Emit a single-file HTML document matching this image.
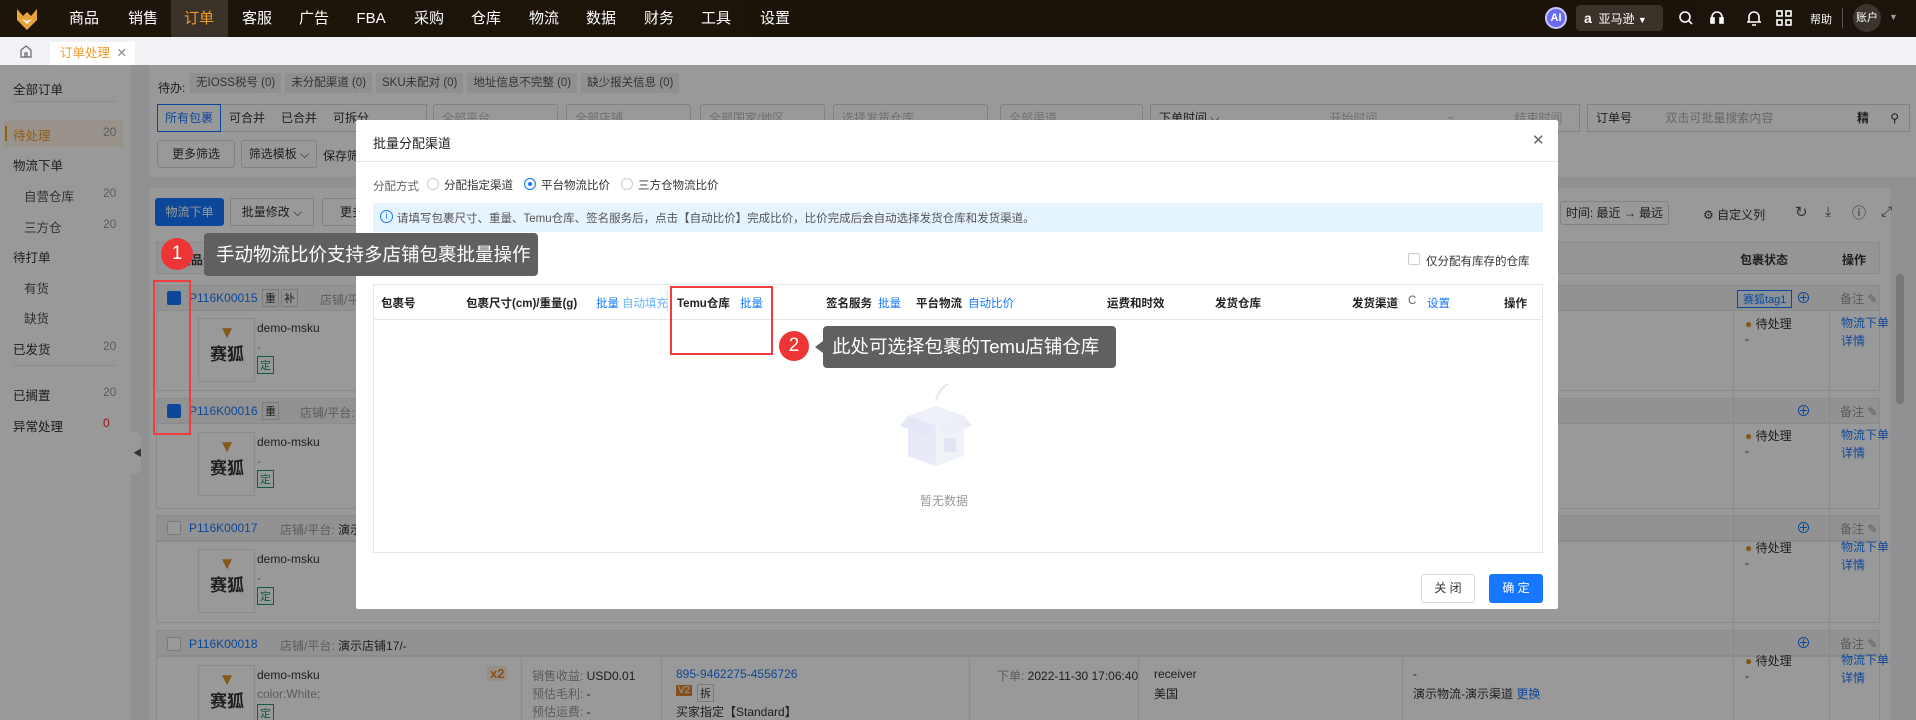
<!DOCTYPE html>
<html style="overflow:hidden"><head><meta charset="utf-8">
<style>
*{box-sizing:border-box;margin:0;padding:0}
html,body{overflow:hidden}
body{width:1916px;height:720px;position:relative;font-family:"Liberation Sans","Noto Sans CJK SC",sans-serif;font-size:12px;color:#333;background:#f0f2f5}
.a{position:absolute;white-space:nowrap}
.nav{left:0;top:0;width:1916px;height:37px;background:linear-gradient(90deg,#1e150a,#1a1208 60%,#1c140b);}
.nav .it{position:absolute;top:0;height:37px;line-height:37px;color:#fff;font-size:15px;transform:translateX(-50%)}
.tabbar{left:0;top:37px;width:1916px;height:28px;background:#f0f2f5}
.side{left:0;top:65px;width:131px;height:655px;background:#fff}
.side .s{position:absolute;font-size:12.5px;color:#333}
.side .n{position:absolute;left:103px;font-size:12px;color:#999}
.blue{color:#1677ff}
.card{position:absolute;background:#fff;border:1px solid #e4e6ea;border-radius:3px}
.btn{position:absolute;border:1px solid #d9d9d9;border-radius:3px;background:#fff;font-size:12px;text-align:center;white-space:nowrap}
.rowh{position:absolute;left:156px;width:1724px;height:26px;background:#f3f4f6;border:1px solid #e6e8eb}
.cb{position:absolute;width:14px;height:14px;border:1px solid #ccc;background:#fff;border-radius:2px}
.cbc{background:#1677ff;border-color:#1677ff}
.mask{left:0;top:65px;width:1916px;height:655px;background:rgba(0,0,0,.4)}
.modal{left:356px;top:120px;width:1202px;height:489px;background:#fff;border-radius:2px}
.red{position:absolute;border:2px solid #f23c3c}
.tip{position:absolute;background:#606060;color:#fff;border-radius:4px;font-size:19px;white-space:nowrap;overflow:hidden}
.circ{position:absolute;border-radius:50%;background:#ee3535;color:#fff;text-align:center;font-size:19px}
.prod{position:absolute;width:57px;height:64px;border:1px solid #e6e6e6;background:#fff}
.sel{position:absolute;top:104px;height:28px;background:#fff;border:1px solid #d9d9d9;border-radius:3px;color:#bbb;font-size:12px;line-height:26px;padding-left:8px}
</style></head><body>

<!-- NAV -->
<div class="a nav">
 <svg class="a" style="left:14px;top:6px" width="26" height="26" viewBox="0 0 26 26"><path d="M3 3 L9 10 L13 6 L17 10 L23 3 L23 14 L13 24 L3 14Z" fill="#e9a33b"/><path d="M8 13 L13 18 L18 13 L13 15Z" fill="#fff"/></svg>
 <div class="a" style="left:171px;top:0;width:57px;height:37px;background:#3a3229"></div>
 <span class="it" style="left:84px">商品</span><span class="it" style="left:143px">销售</span><span class="it" style="left:199px;color:#f29b26">订单</span><span class="it" style="left:257px">客服</span><span class="it" style="left:314px">广告</span><span class="it" style="left:371px">FBA</span><span class="it" style="left:429px">采购</span><span class="it" style="left:486px">仓库</span><span class="it" style="left:544px">物流</span><span class="it" style="left:601px">数据</span><span class="it" style="left:659px">财务</span><span class="it" style="left:716px">工具</span><span class="it" style="left:775px">设置</span>
 <div class="a" style="left:1545px;top:7px;width:22px;height:22px;border-radius:50%;background:#6b6bf0;border:2px solid #c8c8ff;color:#fff;font-size:11px;font-weight:bold;text-align:center;line-height:18px">AI</div>
 <div class="a" style="left:1576px;top:5px;width:87px;height:26px;border-radius:4px;background:#3a3128;color:#fff;font-size:12px;line-height:26px;padding-left:8px"><b style="font-size:14px">a</b>&nbsp; 亚马逊 <span style="font-size:9px">▼</span></div>
 <svg class="a" style="left:1678px;top:10px" width="16" height="16" viewBox="0 0 16 16" fill="none" stroke="#fff" stroke-width="1.6"><circle cx="7" cy="7" r="5"/><path d="M11 11 L14 14"/></svg>
 <svg class="a" style="left:1709px;top:9px" width="16" height="18" viewBox="0 0 16 18" fill="none" stroke="#fff" stroke-width="1.6"><path d="M3 10 V8 a5 5 0 0 1 10 0 V10"/><rect x="2" y="9" width="3" height="5" fill="#fff"/><rect x="11" y="9" width="3" height="5" fill="#fff"/></svg>
 <svg class="a" style="left:1746px;top:9px" width="16" height="18" viewBox="0 0 16 18" fill="none" stroke="#fff" stroke-width="1.6"><path d="M3 13 V8 a5 5 0 0 1 10 0 V13 Z M1 13 H15 M6 16 H10"/></svg>
 <svg class="a" style="left:1776px;top:10px" width="16" height="16" viewBox="0 0 16 16" fill="none" stroke="#fff" stroke-width="1.6"><rect x="1" y="1" width="5" height="5"/><rect x="10" y="1" width="5" height="5"/><rect x="1" y="10" width="5" height="5"/><rect x="10" y="10" width="5" height="5"/></svg>
 <span class="a" style="left:1810px;top:11px;color:#fff;font-size:11px">帮助</span>
 <div class="a" style="left:1842px;top:8px;width:1px;height:20px;background:#555"></div>
 <div class="a" style="left:1853px;top:4px;width:28px;height:28px;border-radius:50%;background:#3b342c;color:#fff;font-size:11px;text-align:center;line-height:28px">账户</div>
 <span class="a" style="left:1889px;top:12px;color:#999;font-size:9px">▼</span>
</div>

<!-- TAB BAR -->
<div class="a tabbar">
 <svg class="a" style="left:19px;top:7px" width="14" height="14" viewBox="0 0 14 14" fill="none" stroke="#666" stroke-width="1.2"><path d="M2 6 L7 2 L12 6 V13 H2Z M6 13 V9 H8 V13"/></svg>
 <div class="a" style="left:50px;top:5px;width:85px;height:23px;background:#fff;color:#f29b26;font-size:12.5px;line-height:23px;padding-left:10px">订单处理 <span style="color:#888;margin-left:3px">✕</span></div>
</div>

<!-- SIDEBAR -->
<div class="a side">
 <span class="s" style="left:13px;top:14px">全部订单</span>
 <div class="a" style="left:13px;top:36px;width:103px;height:1px;background:#e8e8e8"></div>
 <div class="a" style="left:4px;top:55px;width:119px;height:27px;background:#fdf3e6;border-radius:3px"></div>
 <div class="a" style="left:5px;top:61px;width:2px;height:15px;background:#f29b26"></div>
 <span class="s" style="left:13px;top:60px;color:#f29b26">待处理</span><span class="n" style="top:60px">20</span>
 <span class="s" style="left:13px;top:90px">物流下单</span>
 <span class="s" style="left:24px;top:121px;color:#555">自营仓库</span><span class="n" style="top:121px">20</span>
 <span class="s" style="left:24px;top:152px;color:#555">三方仓</span><span class="n" style="top:152px">20</span>
 <span class="s" style="left:13px;top:182px">待打单</span>
 <span class="s" style="left:24px;top:213px;color:#555">有货</span>
 <span class="s" style="left:24px;top:243px;color:#555">缺货</span>
 <span class="s" style="left:13px;top:274px">已发货</span><span class="n" style="top:274px">20</span>
 <div class="a" style="left:13px;top:300px;width:103px;height:1px;background:#e8e8e8"></div>
 <span class="s" style="left:13px;top:320px">已搁置</span><span class="n" style="top:320px">20</span>
 <span class="s" style="left:13px;top:351px">异常处理</span><span class="n" style="top:351px;color:#f5222d">0</span>
</div>
<div class="a" style="left:131px;top:432px;width:10px;height:42px;background:#fff;border-radius:0 6px 6px 0"></div>
<span class="a" style="left:133px;top:446px;font-size:9px;color:#555">◀</span>

<!-- MAIN TOP -->
<div class="card" style="left:150px;top:65px;width:1766px;height:112px;border:none;border-radius:0"></div>
<span class="a" style="left:158px;top:79px;font-size:12px">待办:</span>
<div class="a" style="left:190px;top:74px;font-size:11.5px;color:#555">
 <span style="background:#f0f1f3;padding:4px 6px;margin-right:4px">无IOSS税号 (0)</span><span style="background:#f0f1f3;padding:4px 6px;margin-right:4px">未分配渠道 (0)</span><span style="background:#f0f1f3;padding:4px 6px;margin-right:4px">SKU未配对 (0)</span><span style="background:#f0f1f3;padding:4px 6px;margin-right:4px">地址信息不完整 (0)</span><span style="background:#f0f1f3;padding:4px 6px">缺少报关信息 (0)</span>
</div>
<div class="a" style="left:157px;top:104px;width:270px;height:28px;border:1px solid #d9d9d9;background:#fff;font-size:12px;line-height:26px">
 <span style="display:inline-block;width:64px;text-align:center;border:1px solid #1677ff;color:#1677ff;height:28px;margin:-1px 0 0 -1px">所有包裹</span><span style="display:inline-block;width:52px;text-align:center">可合并</span><span style="display:inline-block;width:52px;text-align:center">已合并</span><span style="display:inline-block;width:52px;text-align:center">可拆分</span>
</div>
<div class="sel" style="left:433px;width:125px">全部平台</div>
<div class="sel" style="left:566px;width:125px">全部店铺</div>
<div class="sel" style="left:700px;width:125px">全部国家/地区</div>
<div class="sel" style="left:833px;width:155px">选择发货仓库</div>
<div class="sel" style="left:1000px;width:143px">全部渠道</div>
<div class="a" style="left:1150px;top:104px;width:430px;height:28px;border:1px solid #d9d9d9;background:#fff;font-size:12px;line-height:26px;padding-left:8px">下单时间 ⌵<span style="color:#bbb;margin-left:110px">开始时间</span><span style="color:#bbb;margin-left:70px">~</span><span style="color:#bbb;margin-left:60px">结束时间</span></div>
<div class="a" style="left:1587px;top:104px;width:323px;height:28px;border:1px solid #d9d9d9;background:#fff;font-size:12px;line-height:26px;padding-left:8px">订单号 <span style="color:#aaa;margin-left:30px">双击可批量搜索内容</span><span style="position:absolute;right:40px;font-weight:bold">精</span><span style="position:absolute;right:10px">⚲</span></div>
<div class="btn" style="left:157px;top:140px;width:78px;height:28px;line-height:26px">更多筛选</div>
<div class="btn" style="left:241px;top:140px;width:76px;height:28px;line-height:26px">筛选模板 ⌵</div>
<span class="a" style="left:323px;top:147px;font-size:12px">保存筛选</span>

<!-- TOOLBAR/TABLE -->
<div class="card" style="left:150px;top:188px;width:1740px;height:532px;border:none"></div>
<div class="a" style="left:155px;top:198px;width:69px;height:28px;background:#1677ff;border-radius:3px;color:#fff;font-size:12px;line-height:28px;text-align:center">物流下单</div>
<div class="btn" style="left:230px;top:198px;width:84px;height:28px;line-height:26px">批量修改 ⌵</div>
<div class="btn" style="left:322px;top:198px;width:60px;height:28px;line-height:26px">更多</div>
<div class="btn" style="left:1560px;top:201px;width:109px;height:24px;line-height:22px">时间: 最近 → 最远</div>
<span class="a" style="left:1703px;top:206px;font-size:12px">⚙ 自定义列</span>
<span class="a" style="left:1795px;top:203px;font-size:15px;color:#555">↻</span><span class="a" style="left:1825px;top:203px;font-size:14px;color:#555">⤓</span><span class="a" style="left:1852px;top:203px;font-size:14px;color:#555">ⓘ</span><span class="a" style="left:1881px;top:203px;font-size:14px;color:#555">⤢</span>
<div class="a" style="left:156px;top:242px;width:1724px;height:32px;background:#f7f8fa;border:1px solid #e6e8eb"></div>
<span class="a" style="left:1740px;top:251px;font-weight:bold">包裹状态</span><span class="a" style="left:1842px;top:251px;font-weight:bold">操作</span>
<div class="a" style="left:1896px;top:274px;width:8px;height:130px;background:#c8c8c8;border-radius:4px"></div>

<!-- rows -->
<div class="rowh" style="top:285px"></div>
<div class="cb cbc" style="left:167px;top:291px"></div>
<span class="a blue" style="left:189px;top:291px;font-size:12px">P116K00015</span>
<span class="a" style="left:262px;top:289px;border:1px solid #ccc;padding:0 2px;font-size:11px">重</span><span class="a" style="left:281px;top:289px;border:1px solid #ccc;padding:0 2px;font-size:11px">补</span>
<span class="a" style="left:320px;top:291px;color:#999">店铺/平台:</span>
<span class="a" style="left:1737px;top:290px;border:1px solid #1677ff;color:#1677ff;padding:0 5px;font-size:11px;background:#eaf3ff">赛狐tag1</span>
<span class="a blue" style="left:1796px;top:287px;font-size:15px">⊕</span><span class="a" style="left:1840px;top:290px;color:#999">备注 ✎</span>
<div class="a" style="left:156px;top:310px;width:1724px;height:81px;background:#fff;border:1px solid #e6e8eb"></div>
<div class="rowh" style="top:398px"></div>
<div class="cb cbc" style="left:167px;top:404px"></div>
<span class="a blue" style="left:189px;top:404px">P116K00016</span>
<span class="a" style="left:262px;top:402px;border:1px solid #ccc;padding:0 2px;font-size:11px">重</span>
<span class="a" style="left:300px;top:404px;color:#999">店铺/平台:</span>
<span class="a blue" style="left:1796px;top:400px;font-size:15px">⊕</span><span class="a" style="left:1840px;top:403px;color:#999">备注 ✎</span>
<div class="a" style="left:156px;top:423px;width:1724px;height:86px;background:#fff;border:1px solid #e6e8eb"></div>
<div class="rowh" style="top:515px"></div>
<div class="cb" style="left:167px;top:521px"></div>
<span class="a blue" style="left:189px;top:521px">P116K00017</span>
<span class="a" style="left:280px;top:521px;color:#999">店铺/平台: <span style="color:#333">演示</span></span>
<span class="a blue" style="left:1796px;top:517px;font-size:15px">⊕</span><span class="a" style="left:1840px;top:520px;color:#999">备注 ✎</span>
<div class="a" style="left:156px;top:541px;width:1724px;height:82px;background:#fff;border:1px solid #e6e8eb"></div>
<div class="rowh" style="top:630px"></div>
<div class="cb" style="left:167px;top:637px"></div>
<span class="a blue" style="left:189px;top:637px">P116K00018</span>
<span class="a" style="left:280px;top:637px;color:#999">店铺/平台: <span style="color:#333">演示店铺17/-</span></span>
<span class="a blue" style="left:1796px;top:632px;font-size:15px">⊕</span><span class="a" style="left:1840px;top:635px;color:#999">备注 ✎</span>
<div class="a" style="left:156px;top:656px;width:1724px;height:70px;background:#fff;border:1px solid #e6e8eb"></div>

<!-- product cells -->
<div class="prod" style="left:198px;top:318px"></div><div class="prod" style="left:198px;top:432px"></div><div class="prod" style="left:198px;top:549px"></div><div class="prod" style="left:198px;top:665px"></div>
<div class="a" style="left:204px;top:322px;font-size:17px;font-weight:bold;line-height:22px;color:#333;text-align:center;width:46px"><span style="color:#d9952b">▼</span><br>赛狐</div>
<div class="a" style="left:204px;top:436px;font-size:17px;font-weight:bold;line-height:22px;color:#333;text-align:center;width:46px"><span style="color:#d9952b">▼</span><br>赛狐</div>
<div class="a" style="left:204px;top:553px;font-size:17px;font-weight:bold;line-height:22px;color:#333;text-align:center;width:46px"><span style="color:#d9952b">▼</span><br>赛狐</div>
<div class="a" style="left:204px;top:669px;font-size:17px;font-weight:bold;line-height:22px;color:#333;text-align:center;width:46px"><span style="color:#d9952b">▼</span><br>赛狐</div>
<span class="a" style="left:257px;top:321px">demo-msku</span><span class="a" style="left:257px;top:340px;color:#999">-</span><span class="a" style="left:257px;top:356px;border:1px solid #1a9a6a;color:#1a9a6a;padding:0 2px;font-size:11px">定</span>
<span class="a" style="left:257px;top:435px">demo-msku</span><span class="a" style="left:257px;top:454px;color:#999">-</span><span class="a" style="left:257px;top:470px;border:1px solid #1a9a6a;color:#1a9a6a;padding:0 2px;font-size:11px">定</span>
<span class="a" style="left:257px;top:552px">demo-msku</span><span class="a" style="left:257px;top:571px;color:#999">-</span><span class="a" style="left:257px;top:587px;border:1px solid #1a9a6a;color:#1a9a6a;padding:0 2px;font-size:11px">定</span>
<span class="a" style="left:257px;top:668px">demo-msku</span><span class="a" style="left:257px;top:687px;color:#999">color:White;</span><span class="a" style="left:257px;top:704px;border:1px solid #1a9a6a;color:#1a9a6a;padding:0 2px;font-size:11px">定</span>
<span class="a" style="left:487px;top:666px;color:#e0852e;font-weight:bold;font-size:13px;background:#fcefe0;padding:0 3px">x2</span>
<div class="a" style="left:521px;top:656px;width:1px;height:64px;background:#e6e8eb"></div>
<span class="a" style="left:532px;top:667px;color:#999">销售收益: <span style="color:#333">USD0.01</span></span>
<span class="a" style="left:532px;top:685px;color:#999">预估毛利: <span style="color:#333">-</span></span>
<span class="a" style="left:532px;top:703px;color:#999">预估运费: <span style="color:#333">-</span></span>
<div class="a" style="left:661px;top:656px;width:1px;height:64px;background:#e6e8eb"></div>
<span class="a blue" style="left:676px;top:667px">895-9462275-4556726</span>
<span class="a" style="left:676px;top:685px;background:#e0852e;color:#fff;font-size:10px;padding:0 2px">V2</span><span class="a" style="left:697px;top:684px;border:1px solid #ccc;padding:0 2px;font-size:11px">拆</span>
<span class="a" style="left:676px;top:703px">买家指定【Standard】</span>
<div class="a" style="left:969px;top:656px;width:1px;height:64px;background:#e6e8eb"></div>
<span class="a" style="left:997px;top:667px;color:#999">下单: <span style="color:#333">2022-11-30 17:06:40</span></span>
<div class="a" style="left:1138px;top:656px;width:1px;height:64px;background:#e6e8eb"></div>
<span class="a" style="left:1154px;top:667px">receiver</span><span class="a" style="left:1154px;top:685px">美国</span>
<div class="a" style="left:1402px;top:656px;width:1px;height:64px;background:#e6e8eb"></div>
<span class="a" style="left:1413px;top:667px">-</span><span class="a" style="left:1413px;top:685px">演示物流-演示渠道 <span class="blue">更换</span></span>
<div class="a" style="left:1733px;top:310px;width:1px;height:410px;background:#e6e8eb"></div>
<div class="a" style="left:1829px;top:310px;width:1px;height:410px;background:#e6e8eb"></div>
<span class="a" style="left:1745px;top:315px"><span style="color:#d9952b">●</span> 待处理<br>-</span>
<span class="a" style="left:1745px;top:427px"><span style="color:#d9952b">●</span> 待处理<br>-</span>
<span class="a" style="left:1745px;top:539px"><span style="color:#d9952b">●</span> 待处理<br>-</span>
<span class="a" style="left:1745px;top:652px"><span style="color:#d9952b">●</span> 待处理<br>-</span>
<span class="a blue" style="left:1841px;top:314px;line-height:18px">物流下单<br>详情</span>
<span class="a blue" style="left:1841px;top:426px;line-height:18px">物流下单<br>详情</span>
<span class="a blue" style="left:1841px;top:538px;line-height:18px">物流下单<br>详情</span>
<span class="a blue" style="left:1841px;top:651px;line-height:18px">物流下单<br>详情</span>
<span class="a" style="left:179px;top:251px;font-weight:bold">商品信息</span>

<!-- MASK -->
<div class="a mask"></div>

<!-- MODAL -->
<div class="a modal">
 <span class="a" style="left:17px;top:13px;font-size:13px;color:#222">批量分配渠道</span>
 <span class="a" style="left:1176px;top:11px;font-size:15px;color:#666">✕</span>
 <div class="a" style="left:0;top:41px;width:1202px;height:1px;background:#e5e5e5"></div>
 <span class="a" style="left:17px;top:58px;font-size:11.5px;color:#666">分配方式</span>
 <span class="a" style="left:71px;top:58px;width:12px;height:12px;border:1px solid #ccc;border-radius:50%"></span><span class="a" style="left:88px;top:57px;font-size:11.5px">分配指定渠道</span>
 <span class="a" style="left:168px;top:58px;width:12px;height:12px;border:1px solid #1677ff;border-radius:50%;box-shadow:inset 0 0 0 3px #fff;background:#1677ff"></span><span class="a" style="left:185px;top:57px;font-size:11.5px">平台物流比价</span>
 <span class="a" style="left:265px;top:58px;width:12px;height:12px;border:1px solid #ccc;border-radius:50%"></span><span class="a" style="left:282px;top:57px;font-size:11.5px">三方仓物流比价</span>
 <div class="a" style="left:17px;top:83px;width:1170px;height:29px;background:#e6f4ff;border-radius:2px"></div>
 <span class="a" style="left:24px;top:90px;width:13px;height:13px;border:1px solid #1677ff;border-radius:50%;color:#1677ff;font-size:9px;text-align:center;line-height:11px">i</span>
 <span class="a" style="left:41px;top:90px;font-size:11.5px;color:#555">请填写包裹尺寸、重量、Temu仓库、签名服务后，点击【自动比价】完成比价，比价完成后会自动选择发货仓库和发货渠道。</span>
 <div class="a" style="left:1052px;top:133px;width:12px;height:12px;border:1px solid #ccc;border-radius:2px"></div>
 <span class="a" style="left:1070px;top:133px;font-size:11.5px">仅分配有库存的仓库</span>
 <div class="a" style="left:17px;top:164px;width:1170px;height:269px;border:1px solid #e5e5e5"></div>
 <div class="a" style="left:17px;top:199px;width:1170px;height:1px;background:#e8e8e8"></div>
 <div class="a" style="left:311px;top:170px;width:1px;height:22px;background:#e0e0e0"></div>
 <div class="a" style="left:0;top:175px;font-size:11.5px;font-weight:bold;color:#222">
  <span class="a" style="left:25px">包裹号</span>
  <span class="a" style="left:110px">包裹尺寸(cm)/重量(g)</span>
  <span class="a blue" style="left:240px;font-weight:normal">批量</span><span class="a" style="left:266px;font-weight:normal;color:#69b1ff">自动填充</span>
  <span class="a" style="left:321px">Temu仓库</span><span class="a blue" style="left:384px;font-weight:normal">批量</span>
  <span class="a" style="left:470px">签名服务</span><span class="a blue" style="left:522px;font-weight:normal">批量</span>
  <span class="a" style="left:560px">平台物流</span><span class="a blue" style="left:612px;font-weight:normal">自动比价</span>
  <span class="a" style="left:751px">运费和时效</span>
  <span class="a" style="left:859px">发货仓库</span>
  <span class="a" style="left:996px">发货渠道</span><span class="a" style="left:1052px;font-weight:normal;color:#666">C</span><span class="a blue" style="left:1071px;font-weight:normal">设置</span>
  <span class="a" style="left:1148px">操作</span>
 </div>
 <svg class="a" style="left:540px;top:260px" width="80" height="90" viewBox="0 0 80 90"><path d="M40 20 Q44 8 52 4" stroke="#e4e8f5" fill="none" stroke-width="2"/><path d="M12 36 L40 26 L68 36 L40 46Z" fill="#eef0f9"/><path d="M12 36 L40 46 L40 86 L12 76Z" fill="#e8ebf7"/><path d="M68 36 L40 46 L40 86 L68 76Z" fill="#f0f2fa"/><path d="M12 36 L4 46 L32 56 L40 46Z" fill="#e4e7f5"/><path d="M68 36 L76 46 L50 56 L40 46Z" fill="#edeff8"/><rect x="48" y="58" width="12" height="14" fill="#e2e5f3"/></svg>
 <span class="a" style="left:564px;top:372px;font-size:12px;color:#999">暂无数据</span>
 <div class="btn" style="left:1065px;top:454px;width:54px;height:29px;line-height:27px">关 闭</div>
 <div class="a" style="left:1133px;top:454px;width:54px;height:29px;line-height:29px;background:#1677ff;color:#fff;border-radius:3px;text-align:center;font-size:12px">确 定</div>
</div>

<!-- Annotations -->
<div class="red" style="left:153px;top:280px;width:38px;height:155px"></div>
<div class="red" style="left:670px;top:286px;width:103px;height:69px"></div>
<div class="tip" style="left:204px;top:233px;width:334px;height:43px;line-height:43px;padding-left:12px;font-size:18.5px">手动物流比价支持多店铺包裹批量操作</div>
<div class="circ" style="left:161px;top:238px;width:32px;height:32px;line-height:32px">1</div>
<div class="tip" style="left:823px;top:326px;width:293px;height:42px;line-height:42px;padding-left:9px;font-size:18.5px">此处可选择包裹的Temu店铺仓库</div>
<div class="a" style="left:815px;top:341px;width:0;height:0;border-top:6px solid transparent;border-bottom:6px solid transparent;border-right:8px solid #606060"></div>
<div class="circ" style="left:779px;top:331px;width:30px;height:30px;line-height:30px">2</div>
</body></html>
